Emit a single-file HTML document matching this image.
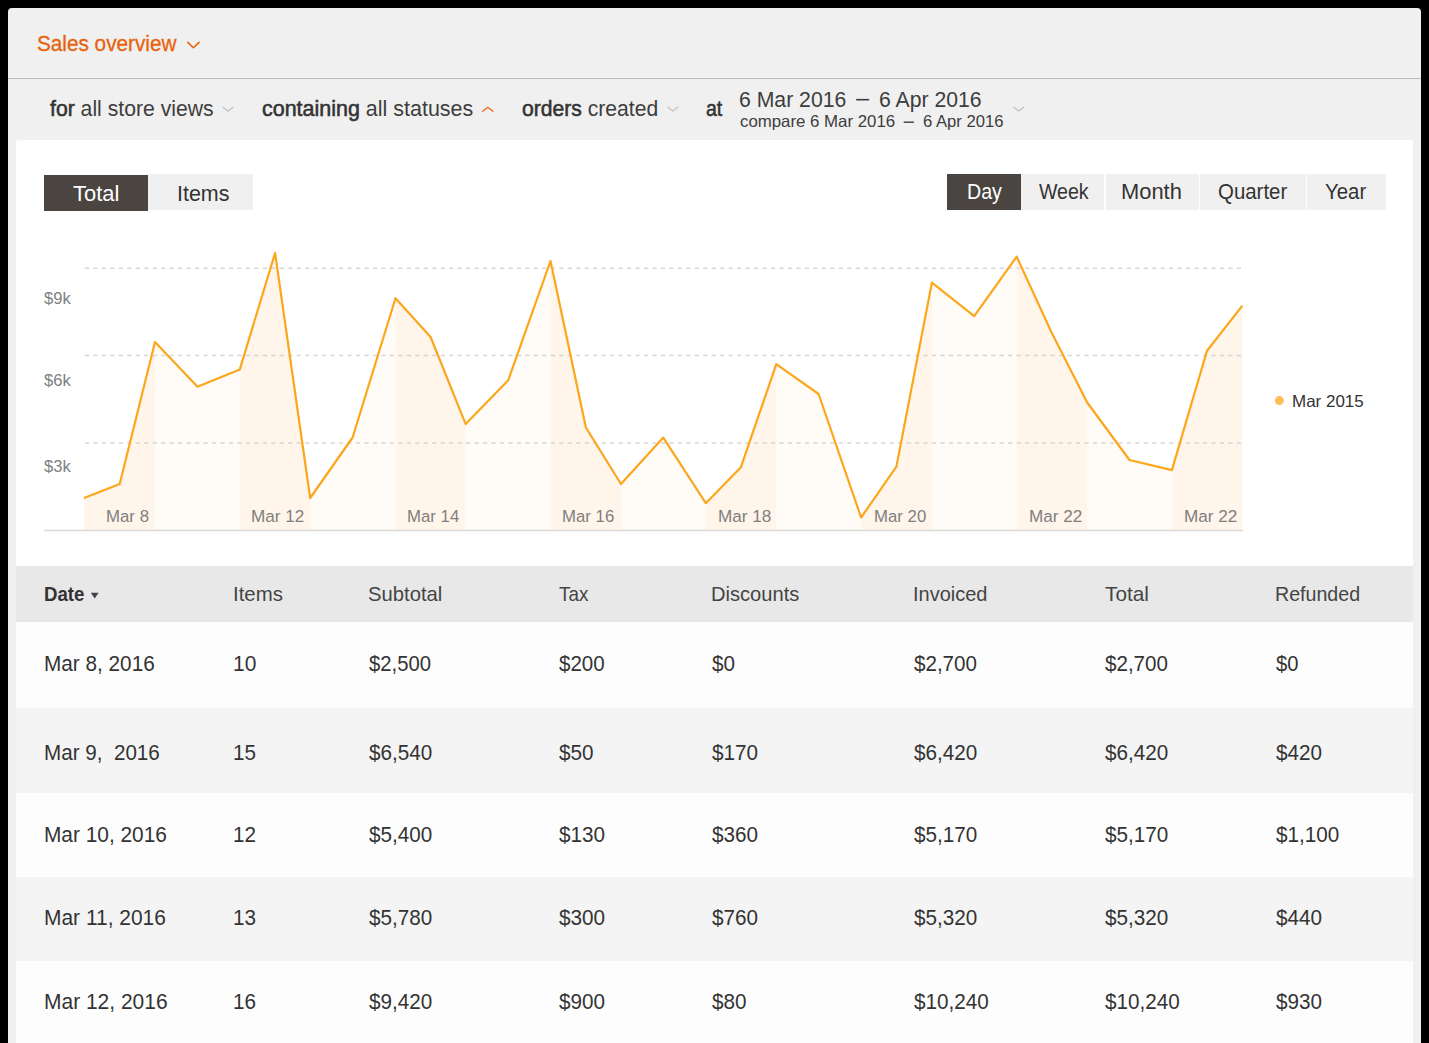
<!DOCTYPE html>
<html><head><meta charset="utf-8"><title>Sales overview</title>
<style>
html,body{margin:0;padding:0}
body{width:1429px;height:1043px;overflow:hidden;position:relative;background:#000;font-family:"Liberation Sans",sans-serif}
.a{position:absolute}
.t{position:absolute;white-space:nowrap;line-height:1;transform-origin:0 0}
.t strong{font-weight:700;color:#333}
.t b{font-weight:400;-webkit-text-stroke:0.55px currentColor;color:#333}
svg{position:absolute;left:0;top:0}
</style></head><body>
<div class="a" style="left:8px;top:8px;width:1413px;height:1100px;background:#f0f0f0;border-radius:4px"></div>
<div class="a" style="left:8px;top:78px;width:1413px;height:1px;background:#bdbdbd"></div>
<div class="a" style="left:16px;top:140px;width:1397px;height:426px;background:#ffffff;border-radius:3px 3px 0 0"></div>
<div class="a" style="left:16px;top:566px;width:1397px;height:56px;background:#e8e8e8"></div>
<div class="a" style="left:16px;top:622px;width:1397px;height:86px;background:#fdfdfd"></div>
<div class="a" style="left:16px;top:708px;width:1397px;height:85px;background:#f4f4f4"></div>
<div class="a" style="left:16px;top:793px;width:1397px;height:83.5px;background:#fdfdfd"></div>
<div class="a" style="left:16px;top:876.5px;width:1397px;height:84px;background:#f4f4f4"></div>
<div class="a" style="left:16px;top:960.5px;width:1397px;height:90px;background:#fdfdfd"></div>
<div class="a" style="left:43.5px;top:174.8px;width:104.7px;height:36.7px;background:#4a4541"></div>
<div class="a" style="left:148.2px;top:173.7px;width:104.4px;height:36.6px;background:#f0f0f0"></div>
<div class="a" style="left:947.3px;top:173.8px;width:73.7px;height:36.4px;background:#4a4541"></div>
<div class="a" style="left:1021px;top:173.8px;width:83px;height:36.4px;background:#f0f0f0"></div>
<div class="a" style="left:1105.7px;top:173.8px;width:93px;height:36.4px;background:#f0f0f0"></div>
<div class="a" style="left:1200.4px;top:173.8px;width:105.3px;height:36.4px;background:#f0f0f0"></div>
<div class="a" style="left:1307.3px;top:173.8px;width:78.3px;height:36.4px;background:#f0f0f0"></div>
<svg width="1429" height="1043" viewBox="0 0 1429 1043">
<polygon points="84.0,498.0 119.7,484.0 155.0,342.0 155.0,530.5 84.0,530.5" fill="#fff5ea"/>
<polygon points="155.0,342.0 197.5,386.7 239.8,369.4 239.8,530.5 155.0,530.5" fill="#fffbf6"/>
<polygon points="239.8,369.4 275.1,253.0 310.2,498.0 310.2,530.5 239.8,530.5" fill="#fff5ea"/>
<polygon points="310.2,498.0 352.6,437.5 395.5,298.2 395.5,530.5 310.2,530.5" fill="#fffbf6"/>
<polygon points="395.5,298.2 430.6,337.0 465.7,424.1 465.7,530.5 395.5,530.5" fill="#fff5ea"/>
<polygon points="465.7,424.1 508.2,380.3 550.5,261.0 550.5,530.5 465.7,530.5" fill="#fffbf6"/>
<polygon points="550.5,261.0 585.9,427.5 621.0,484.0 621.0,530.5 550.5,530.5" fill="#fff5ea"/>
<polygon points="621.0,484.0 663.3,437.6 705.8,503.2 705.8,530.5 621.0,530.5" fill="#fffbf6"/>
<polygon points="705.8,503.2 740.9,467.2 776.3,364.2 776.3,530.5 705.8,530.5" fill="#fff5ea"/>
<polygon points="776.3,364.2 818.6,394.0 861.1,517.5 861.1,530.5 776.3,530.5" fill="#fffbf6"/>
<polygon points="861.1,517.5 896.4,466.6 931.9,282.6 931.9,530.5 861.1,530.5" fill="#fff5ea"/>
<polygon points="931.9,282.6 974.2,316.2 1016.7,256.7 1016.7,530.5 931.9,530.5" fill="#fffbf6"/>
<polygon points="1016.7,256.7 1051.3,332.0 1087.2,402.5 1087.2,530.5 1016.7,530.5" fill="#fff5ea"/>
<polygon points="1087.2,402.5 1129.5,460.0 1171.9,470.1 1171.9,530.5 1087.2,530.5" fill="#fffbf6"/>
<polygon points="1171.9,470.1 1207.0,350.7 1242.4,305.6 1242.4,530.5 1171.9,530.5" fill="#fff5ea"/>
<line x1="84.9" y1="268.2" x2="1242" y2="268.2" stroke="#d6d6d6" stroke-width="1.4" stroke-dasharray="4.2 4.27"/>
<line x1="84.9" y1="355.5" x2="1242" y2="355.5" stroke="#d6d6d6" stroke-width="1.4" stroke-dasharray="4.2 4.27"/>
<line x1="84.9" y1="443.0" x2="1242" y2="443.0" stroke="#d6d6d6" stroke-width="1.4" stroke-dasharray="4.2 4.27"/>
<line x1="44" y1="530.5" x2="1243" y2="530.5" stroke="#d9d9d9" stroke-width="1.3"/>
<polyline points="84.0,498.0 119.7,484.0 155.0,342.0 197.5,386.7 239.8,369.4 275.1,253.0 310.2,498.0 352.6,437.5 395.5,298.2 430.6,337.0 465.7,424.1 508.2,380.3 550.5,261.0 585.9,427.5 621.0,484.0 663.3,437.6 705.8,503.2 740.9,467.2 776.3,364.2 818.6,394.0 861.1,517.5 896.4,466.6 931.9,282.6 974.2,316.2 1016.7,256.7 1051.3,332.0 1087.2,402.5 1129.5,460.0 1171.9,470.1 1207.0,350.7 1242.4,305.6" fill="none" stroke="#fca71b" stroke-width="2.2" stroke-linejoin="round"/>
<circle cx="1279.4" cy="400.6" r="4.5" fill="#fdbf55"/>
<polyline points="187.8,42.4 193.4,47.8 199.1,42.4" fill="none" stroke="#e8620c" stroke-width="1.55" stroke-linecap="round" stroke-linejoin="round"/>
<polyline points="223.2,107.2 228.1,111.2 232.9,107.2" fill="none" stroke="#c2c2c2" stroke-width="1.30" stroke-linecap="round" stroke-linejoin="round"/>
<polyline points="482.7,111.2 487.8,107.3 492.9,111.2" fill="none" stroke="#ec7a30" stroke-width="1.50" stroke-linecap="round" stroke-linejoin="round"/>
<polyline points="667.9,107.2 672.8,111.1 677.8,107.2" fill="none" stroke="#c2c2c2" stroke-width="1.30" stroke-linecap="round" stroke-linejoin="round"/>
<polyline points="1013.9,107.3 1018.6,111.1 1023.8,107.3" fill="none" stroke="#c2c2c2" stroke-width="1.30" stroke-linecap="round" stroke-linejoin="round"/>
<rect x="856.2" y="98.9" width="13" height="1.6" fill="#3d3d3d"/>
<rect x="903.7" y="121.5" width="10.2" height="1.4" fill="#3d3d3d"/>
<polygon points="90.8,592.8 98.6,592.8 94.7,598.4" fill="#444"/>
</svg>
<div class="t" id="sales" style="left:37.30px;top:32.56px;font-size:21.90px;color:#e8620c;transform:scaleX(0.9471);-webkit-text-stroke:0.3px currentColor">Sales overview</div>
<div class="t" id="f1" style="left:49.80px;top:97.73px;font-size:21.70px;color:#3d3d3d;transform:scaleX(0.9769)"><b>for</b> all store views</div>
<div class="t" id="f2" style="left:261.80px;top:97.73px;font-size:21.70px;color:#3d3d3d;transform:scaleX(0.9898)"><b>containing</b> all statuses</div>
<div class="t" id="f3" style="left:522.00px;top:97.73px;font-size:21.70px;color:#3d3d3d;transform:scaleX(0.9741)"><b>orders</b> created</div>
<div class="t" id="f4" style="left:706.40px;top:97.73px;font-size:21.70px;color:#3d3d3d;transform:scaleX(0.9010)"><b>at</b></div>
<div class="t" id="d1" style="left:739.40px;top:88.58px;font-size:22.00px;color:#3d3d3d;transform:scaleX(0.9643)">6 Mar 2016</div>
<div class="t" id="d1b" style="left:878.50px;top:88.58px;font-size:22.00px;color:#3d3d3d;transform:scaleX(0.9643)">6 Apr 2016</div>
<div class="t" id="d2" style="left:740.40px;top:112.63px;font-size:16.50px;color:#3d3d3d;transform:scaleX(1.0191)">compare 6 Mar 2016</div>
<div class="t" id="d2b" style="left:922.50px;top:112.63px;font-size:16.50px;color:#3d3d3d;transform:scaleX(1.0077)">6 Apr 2016</div>
<div class="t" id="total" style="left:72.60px;top:183.26px;font-size:21.90px;color:#ffffff;transform:scaleX(1.0006)">Total</div>
<div class="t" id="items" style="left:176.80px;top:183.26px;font-size:21.90px;color:#333333;transform:scaleX(0.9808)">Items</div>
<div class="t" id="day" style="left:966.80px;top:180.66px;font-size:21.90px;color:#ffffff;transform:scaleX(0.8951)">Day</div>
<div class="t" id="week" style="left:1038.60px;top:180.66px;font-size:21.90px;color:#333333;transform:scaleX(0.8932)">Week</div>
<div class="t" id="month" style="left:1120.80px;top:180.66px;font-size:21.90px;color:#333333;transform:scaleX(1.0002)">Month</div>
<div class="t" id="quarter" style="left:1217.80px;top:180.66px;font-size:21.90px;color:#333333;transform:scaleX(0.9326)">Quarter</div>
<div class="t" id="year" style="left:1324.70px;top:180.66px;font-size:21.90px;color:#333333;transform:scaleX(0.9323)">Year</div>
<div class="t" id="y9" style="left:44.00px;top:289.84px;font-size:17.20px;color:#7f7f7f;transform:scaleX(0.9649)">$9k</div>
<div class="t" id="y6" style="left:44.00px;top:371.94px;font-size:17.20px;color:#7f7f7f;transform:scaleX(0.9649)">$6k</div>
<div class="t" id="y3" style="left:44.00px;top:457.84px;font-size:17.20px;color:#7f7f7f;transform:scaleX(0.9649)">$3k</div>
<div class="t" id="x0" style="left:105.60px;top:508.98px;font-size:16.80px;color:#7f7f7f;transform:scaleX(1.0023)">Mar 8</div>
<div class="t" id="x1" style="left:251.10px;top:508.98px;font-size:16.80px;color:#7f7f7f;transform:scaleX(1.0199)">Mar 12</div>
<div class="t" id="x2" style="left:406.60px;top:508.98px;font-size:16.80px;color:#7f7f7f;transform:scaleX(1.0003)">Mar 14</div>
<div class="t" id="x3" style="left:561.90px;top:508.98px;font-size:16.80px;color:#7f7f7f;transform:scaleX(1.0003)">Mar 16</div>
<div class="t" id="x4" style="left:718.40px;top:508.98px;font-size:16.80px;color:#7f7f7f;transform:scaleX(1.0208)">Mar 18</div>
<div class="t" id="x5" style="left:874.00px;top:508.98px;font-size:16.80px;color:#7f7f7f;transform:scaleX(1.0002)">Mar 20</div>
<div class="t" id="x6" style="left:1029.30px;top:508.98px;font-size:16.80px;color:#7f7f7f;transform:scaleX(1.0199)">Mar 22</div>
<div class="t" id="x7" style="left:1184.40px;top:508.98px;font-size:16.80px;color:#7f7f7f;transform:scaleX(1.0207)">Mar 22</div>
<div class="t" id="legend" style="left:1291.90px;top:392.63px;font-size:16.50px;color:#333333;transform:scaleX(1.0292)">Mar 2015</div>
<div class="t" id="h0" style="left:43.70px;top:584.29px;font-size:20.80px;color:#333333;transform:scaleX(0.8979)"><strong>Date</strong></div>
<div class="t" id="h1" style="left:233.00px;top:584.29px;font-size:20.80px;color:#444444;transform:scaleX(0.9803)">Items</div>
<div class="t" id="h2" style="left:368.00px;top:584.29px;font-size:20.80px;color:#444444;transform:scaleX(0.9731)">Subtotal</div>
<div class="t" id="h3" style="left:558.90px;top:584.29px;font-size:20.80px;color:#444444;transform:scaleX(0.9075)">Tax</div>
<div class="t" id="h4" style="left:711.10px;top:584.29px;font-size:20.80px;color:#444444;transform:scaleX(0.9667)">Discounts</div>
<div class="t" id="h5" style="left:913.10px;top:584.29px;font-size:20.80px;color:#444444;transform:scaleX(0.9608)">Invoiced</div>
<div class="t" id="h6" style="left:1104.60px;top:584.29px;font-size:20.80px;color:#444444;transform:scaleX(1.0005)">Total</div>
<div class="t" id="h7" style="left:1274.50px;top:584.29px;font-size:20.80px;color:#444444;transform:scaleX(0.9432)">Refunded</div>
<div class="t" id="r0_0" style="left:43.70px;top:653.16px;font-size:21.90px;color:#333333;transform:scaleX(0.9478)">Mar 8, 2016</div>
<div class="t" id="r0_1" style="left:233.00px;top:653.16px;font-size:21.90px;color:#333333;transform:scaleX(0.9582)">10</div>
<div class="t" id="r0_2" style="left:369.00px;top:653.16px;font-size:21.90px;color:#333333;transform:scaleX(0.9255)">$2,500</div>
<div class="t" id="r0_3" style="left:558.90px;top:653.16px;font-size:21.90px;color:#333333;transform:scaleX(0.9380)">$200</div>
<div class="t" id="r0_4" style="left:712.10px;top:653.16px;font-size:21.90px;color:#333333;transform:scaleX(0.9440)">$0</div>
<div class="t" id="r0_5" style="left:914.10px;top:653.16px;font-size:21.90px;color:#333333;transform:scaleX(0.9406)">$2,700</div>
<div class="t" id="r0_6" style="left:1104.60px;top:653.16px;font-size:21.90px;color:#333333;transform:scaleX(0.9405)">$2,700</div>
<div class="t" id="r0_7" style="left:1275.50px;top:653.16px;font-size:21.90px;color:#333333;transform:scaleX(0.9238)">$0</div>
<div class="t" id="r1_0" style="left:43.70px;top:741.76px;font-size:21.90px;color:#333333;transform:scaleX(0.9422)">Mar 9, &nbsp;2016</div>
<div class="t" id="r1_1" style="left:233.00px;top:741.76px;font-size:21.90px;color:#333333;transform:scaleX(0.9440)">15</div>
<div class="t" id="r1_2" style="left:369.00px;top:741.76px;font-size:21.90px;color:#333333;transform:scaleX(0.9440)">$6,540</div>
<div class="t" id="r1_3" style="left:558.90px;top:741.76px;font-size:21.90px;color:#333333;transform:scaleX(0.9440)">$50</div>
<div class="t" id="r1_4" style="left:712.10px;top:741.76px;font-size:21.90px;color:#333333;transform:scaleX(0.9440)">$170</div>
<div class="t" id="r1_5" style="left:914.10px;top:741.76px;font-size:21.90px;color:#333333;transform:scaleX(0.9440)">$6,420</div>
<div class="t" id="r1_6" style="left:1104.60px;top:741.76px;font-size:21.90px;color:#333333;transform:scaleX(0.9440)">$6,420</div>
<div class="t" id="r1_7" style="left:1275.50px;top:741.76px;font-size:21.90px;color:#333333;transform:scaleX(0.9440)">$420</div>
<div class="t" id="r2_0" style="left:43.70px;top:823.66px;font-size:21.90px;color:#333333;transform:scaleX(0.9528)">Mar 10, 2016</div>
<div class="t" id="r2_1" style="left:233.00px;top:823.66px;font-size:21.90px;color:#333333;transform:scaleX(0.9440)">12</div>
<div class="t" id="r2_2" style="left:369.00px;top:823.66px;font-size:21.90px;color:#333333;transform:scaleX(0.9440)">$5,400</div>
<div class="t" id="r2_3" style="left:558.90px;top:823.66px;font-size:21.90px;color:#333333;transform:scaleX(0.9440)">$130</div>
<div class="t" id="r2_4" style="left:712.10px;top:823.66px;font-size:21.90px;color:#333333;transform:scaleX(0.9440)">$360</div>
<div class="t" id="r2_5" style="left:914.10px;top:823.66px;font-size:21.90px;color:#333333;transform:scaleX(0.9440)">$5,170</div>
<div class="t" id="r2_6" style="left:1104.60px;top:823.66px;font-size:21.90px;color:#333333;transform:scaleX(0.9440)">$5,170</div>
<div class="t" id="r2_7" style="left:1275.50px;top:823.66px;font-size:21.90px;color:#333333;transform:scaleX(0.9440)">$1,100</div>
<div class="t" id="r3_0" style="left:43.70px;top:907.06px;font-size:21.90px;color:#333333;transform:scaleX(0.9567)">Mar 11, 2016</div>
<div class="t" id="r3_1" style="left:233.00px;top:907.06px;font-size:21.90px;color:#333333;transform:scaleX(0.9440)">13</div>
<div class="t" id="r3_2" style="left:369.00px;top:907.06px;font-size:21.90px;color:#333333;transform:scaleX(0.9440)">$5,780</div>
<div class="t" id="r3_3" style="left:558.90px;top:907.06px;font-size:21.90px;color:#333333;transform:scaleX(0.9440)">$300</div>
<div class="t" id="r3_4" style="left:712.10px;top:907.06px;font-size:21.90px;color:#333333;transform:scaleX(0.9440)">$760</div>
<div class="t" id="r3_5" style="left:914.10px;top:907.06px;font-size:21.90px;color:#333333;transform:scaleX(0.9440)">$5,320</div>
<div class="t" id="r3_6" style="left:1104.60px;top:907.06px;font-size:21.90px;color:#333333;transform:scaleX(0.9440)">$5,320</div>
<div class="t" id="r3_7" style="left:1275.50px;top:907.06px;font-size:21.90px;color:#333333;transform:scaleX(0.9440)">$440</div>
<div class="t" id="r4_0" style="left:43.70px;top:991.46px;font-size:21.90px;color:#333333;transform:scaleX(0.9582)">Mar 12, 2016</div>
<div class="t" id="r4_1" style="left:233.00px;top:991.46px;font-size:21.90px;color:#333333;transform:scaleX(0.9440)">16</div>
<div class="t" id="r4_2" style="left:369.00px;top:991.46px;font-size:21.90px;color:#333333;transform:scaleX(0.9440)">$9,420</div>
<div class="t" id="r4_3" style="left:558.90px;top:991.46px;font-size:21.90px;color:#333333;transform:scaleX(0.9440)">$900</div>
<div class="t" id="r4_4" style="left:712.10px;top:991.46px;font-size:21.90px;color:#333333;transform:scaleX(0.9440)">$80</div>
<div class="t" id="r4_5" style="left:914.10px;top:991.46px;font-size:21.90px;color:#333333;transform:scaleX(0.9440)">$10,240</div>
<div class="t" id="r4_6" style="left:1104.60px;top:991.46px;font-size:21.90px;color:#333333;transform:scaleX(0.9440)">$10,240</div>
<div class="t" id="r4_7" style="left:1275.50px;top:991.46px;font-size:21.90px;color:#333333;transform:scaleX(0.9440)">$930</div>
</body></html>
